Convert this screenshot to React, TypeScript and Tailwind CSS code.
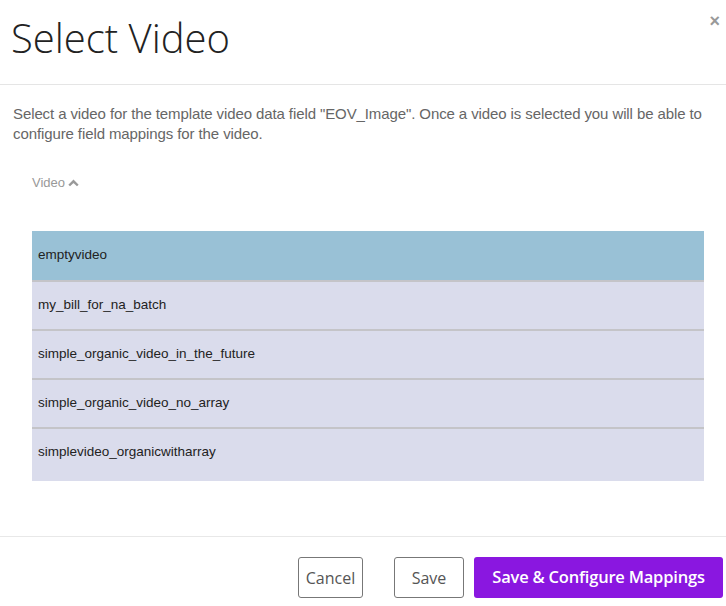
import React from "react";

const rows = [
  "emptyvideo",
  "my_bill_for_na_batch",
  "simple_organic_video_in_the_future",
  "simple_organic_video_no_array",
  "simplevideo_organicwitharray",
];

export default function App() {
  return (
    <div className="w-[726px] h-[606px] bg-white flex flex-col relative" style={{ fontFamily: "'Liberation Sans', Arial, sans-serif" }}>
      <div className="h-[85px] border-b border-[#e5e5e5] flex items-start pl-[11px] pt-[11px]">
        <h1 className="text-[40px] leading-[54px] font-light text-[#222]" style={{ fontFamily: "'Open Sans', sans-serif" }}>
          Select Video
        </h1>
      </div>
      <button className="absolute right-[6px] top-[12px] text-[#999] text-[18px] font-bold leading-none">×</button>
      <div className="flex-1 px-[13px] pt-[19px]">
        <p className="text-[15px] leading-[20px] text-[#666] tracking-[-0.1px]">
          Select a video for the template video data field "EOV_Image". Once a video is selected you will be able to configure field mappings for the video.
        </p>
        <div className="mt-[29px] ml-[19px] flex items-center gap-[3px] text-[13px] text-[#999]">
          <span>Video</span>
          <svg width="11" height="8" viewBox="0 0 11 8">
            <path d="M1.2 6.5 L5.5 2.3 L9.8 6.5" stroke="#999" strokeWidth="2.4" fill="none" />
          </svg>
        </div>
        <div className="mt-[38px] ml-[19px] w-[672px] flex flex-col">
          {rows.map((r, i) => (
            <div
              key={r}
              className={`flex items-center pl-[6px] text-[13.5px] text-[#222] ${i === 0 ? "bg-[#99c1d6] h-[49px]" : "bg-[#dadcec] border-t-2 border-[#c4c4c8] h-[49px]"} ${i === rows.length - 1 ? "h-[54px] pb-[5px]" : ""}`}
            >
              {r}
            </div>
          ))}
        </div>
      </div>
      <div className="h-[70px] border-t border-[#e8e8e8] flex items-start justify-end pr-[3px] pt-[20px] gap-[10px]" style={{ fontFamily: "'Open Sans', sans-serif" }}>
        <button className="h-[41px] w-[65px] border border-[#777] rounded-[3px] text-[16px] text-[#555] bg-white">Cancel</button>
        <button className="h-[41px] w-[70px] border border-[#777] rounded-[3px] text-[16px] text-[#555] bg-white ml-[21px]">Save</button>
        <button className="h-[41px] w-[249px] rounded-[3px] text-[16.5px] font-semibold text-white bg-[#8a17e0] tracking-[-0.2px]">Save &amp; Configure Mappings</button>
      </div>
    </div>
  );
}
